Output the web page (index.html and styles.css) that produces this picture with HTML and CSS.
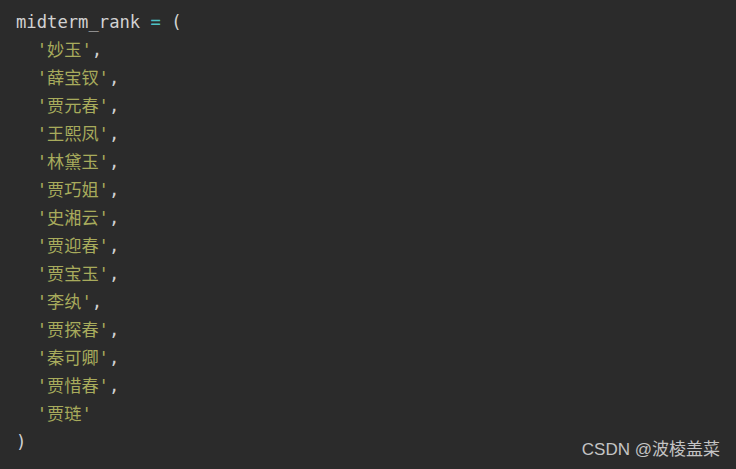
FILE: index.html
```html
<!DOCTYPE html>
<html lang="zh">
<head>
<meta charset="utf-8">
<link rel="stylesheet" href="styles.css">
</head>
<body>
<div class="editor">
  <div class="code">
    <div class="line"><span class="id">midterm_rank</span> <span class="op">=</span> <span>(</span></div>
    <div class="line in"><span class="str">'妙玉'</span><span>,</span></div>
    <div class="line in"><span class="str">'薛宝钗'</span><span>,</span></div>
    <div class="line in"><span class="str">'贾元春'</span><span>,</span></div>
    <div class="line in"><span class="str">'王熙凤'</span><span>,</span></div>
    <div class="line in"><span class="str">'林黛玉'</span><span>,</span></div>
    <div class="line in"><span class="str">'贾巧姐'</span><span>,</span></div>
    <div class="line in"><span class="str">'史湘云'</span><span>,</span></div>
    <div class="line in"><span class="str">'贾迎春'</span><span>,</span></div>
    <div class="line in"><span class="str">'贾宝玉'</span><span>,</span></div>
    <div class="line in"><span class="str">'李纨'</span><span>,</span></div>
    <div class="line in"><span class="str">'贾探春'</span><span>,</span></div>
    <div class="line in"><span class="str">'秦可卿'</span><span>,</span></div>
    <div class="line in"><span class="str">'贾惜春'</span><span>,</span></div>
    <div class="line in"><span class="str">'贾琏'</span></div>
    <div class="line"><span>)</span></div>
  </div>
  <div class="watermark">CSDN @波棱盖菜</div>
</div>
</body>
</html>
```
FILE: styles.css
```css
html, body {
  margin: 0;
  padding: 0;
  background: #2b2b2b;
}
.editor {
  position: relative;
  width: 736px;
  height: 469px;
  background: #2b2b2b;
  overflow: hidden;
}
.code {
  display: flex;
  flex-direction: column;
  padding: 8px 0 0 16px;
  font-family: "DejaVu Sans Mono", "Noto Sans CJK SC", monospace;
  font-size: 17.2px;
  color: #d2d2d2;
}
.line {
  height: 28px;
  line-height: 28px;
  white-space: pre;
}
.line.in {
  padding-left: 20.7px;
}
.op {
  color: #4fc1c4;
}
.str {
  color: #a8ab5c;
}
.watermark {
  position: absolute;
  right: 16px;
  bottom: 8px;
  font-family: "Liberation Sans", "Noto Sans CJK SC", sans-serif;
  font-size: 17px;
  line-height: 22px;
  color: #c4c4c4;
}
```
